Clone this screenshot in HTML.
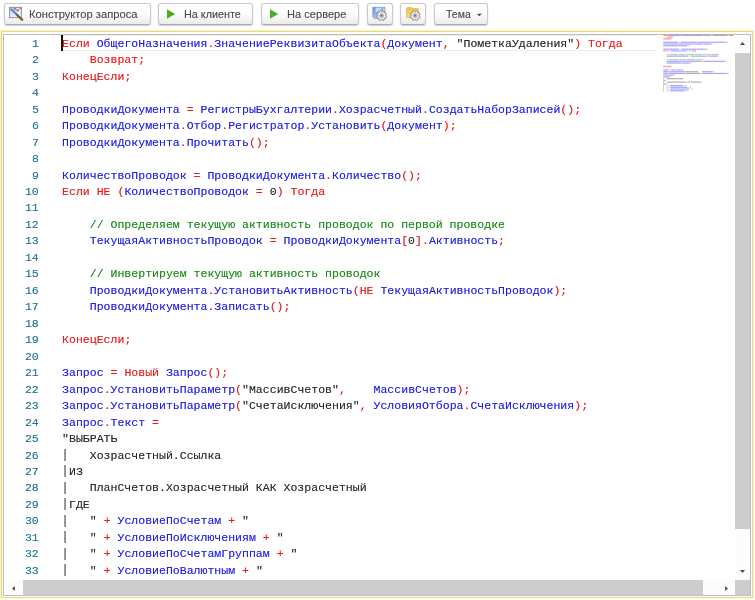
<!DOCTYPE html>
<html><head><meta charset="utf-8">
<style>
html,body{margin:0;padding:0;background:#fff;width:755px;height:600px;overflow:hidden;}
body{position:relative;font-family:"Liberation Sans",sans-serif;}
.btn{position:absolute;top:3px;height:20px;box-sizing:content-box;border:1px solid #c9c9c9;border-bottom-color:#a9a9a9;border-radius:3px;
 background:linear-gradient(#ffffff 0%,#fdfdfd 45%,#ececef 100%);box-shadow:0 1px 1.5px rgba(0,0,0,0.2);will-change:transform;}
.btn .t{position:absolute;transform-origin:0 0;top:3.4px;font-size:11.3px;line-height:14px;color:#4a4a4a;text-shadow:0 0 0.6px rgba(74,74,74,0.4);white-space:nowrap;}
.play{position:absolute;left:9px;top:6px;width:0;height:0;border-left:8px solid #3cb52e;border-top:4.5px solid transparent;border-bottom:4.5px solid transparent;}
.bx{position:absolute;}
.ln,.cl{position:absolute;font-family:"Liberation Mono",monospace;font-size:11.54px;line-height:16px;height:16px;white-space:pre;}
.ln{left:0;width:38.8px;text-align:right;color:#237893;text-shadow:0 0 0.6px rgba(35,120,147,0.45);}
.cl{left:62.1px;}
.k,.p{color:#ea1a1a;text-shadow:0 0 0.6px rgba(234,26,26,0.45)}.i{color:#2020e4;text-shadow:0 0 0.6px rgba(32,32,228,0.45)}.s,.n{color:#2a2a2a;text-shadow:0 0 0.6px rgba(42,42,42,0.45)}.c{color:#1a8c1a;text-shadow:0 0 0.6px rgba(26,140,26,0.45)}.b{display:inline-block;width:6.924px;height:12px;vertical-align:top;margin-top:1.3px;color:transparent;overflow:hidden;background:linear-gradient(90deg,rgba(150,150,150,0) 1.9px,rgba(150,150,150,0.55) 2.2px,#8e8e8e 2.6px,#8e8e8e 3.5px,rgba(150,150,150,0.55) 3.9px,rgba(150,150,150,0) 4.2px)}
</style></head><body>
<div class="btn" style="left:4px;width:145px"><span class="t" style="left:24.2px;transform:scaleX(0.990)">Конструктор запроса</span></div>
<div class="btn" style="left:158px;width:93px"><span class="t" style="left:24.6px;transform:scaleX(0.955)">На клиенте</span></div>
<div class="btn" style="left:261px;width:96px"><span class="t" style="left:24.8px;transform:scaleX(0.982)">На сервере</span></div>
<div class="btn" style="left:367px;width:24px"></div>
<div class="btn" style="left:400px;width:24px"></div>
<div class="btn" style="left:434px;width:52px"><span class="t" style="left:11.3px;transform:scaleX(0.930)">Тема</span></div>
<svg class="bx" style="left:0;top:0" width="500" height="28" viewBox="0 0 500 28">
<defs>
<linearGradient id="g1" x1="0" y1="0" x2="1" y2="1"><stop offset="0" stop-color="#bcdcf2"/><stop offset="1" stop-color="#ffffff"/></linearGradient>
<linearGradient id="g2" x1="0" y1="0" x2="0" y2="1"><stop offset="0" stop-color="#6b96d2"/><stop offset="1" stop-color="#a8c6ea"/></linearGradient>
<linearGradient id="g3" x1="0" y1="0" x2="0" y2="1"><stop offset="0" stop-color="#f3c049"/><stop offset="1" stop-color="#f1e27c"/></linearGradient>
</defs>
<!-- query builder icon -->
<rect x="9.6" y="7.4" width="11.8" height="10.2" fill="url(#g1)" stroke="#8d9096" stroke-width="1"/>
<circle cx="15" cy="8.7" r="1.2" fill="#dc6a50"/><circle cx="17.6" cy="10.2" r="1.3" fill="#dc6a50"/><circle cx="20.6" cy="8.3" r="1.1" fill="#d8705c"/>
<path d="M11.3 9.3 L16.6 14.4" stroke="#4c8fd2" stroke-width="2.2" stroke-linecap="round"/>
<path d="M16.4 14.2 L18.2 16" stroke="#4e8040" stroke-width="2.2"/>
<path d="M18 15.8 L22.2 19.8" stroke="#7a5a1e" stroke-width="2.2" stroke-linecap="round"/>
<!-- save settings icon -->
<path d="M372.8 7.3 H385 V18.2 H374 L372.8 17 Z" fill="url(#g2)" stroke="#5b83bd" stroke-width="0.6"/>
<rect x="375.6" y="7.6" width="9" height="4.4" fill="#c4d8f2"/>
<rect x="381.4" y="8" width="1.6" height="3" fill="#86a8da"/>
<path d="M386.56 16.79 L385.95 18.26 L384.80 18.00 L384.00 18.80 L384.26 19.95 L382.79 20.56 L382.16 19.56 L381.04 19.56 L380.41 20.56 L378.94 19.95 L379.20 18.80 L378.40 18.00 L377.25 18.26 L376.64 16.79 L377.64 16.16 L377.64 15.04 L376.64 14.41 L377.25 12.94 L378.40 13.20 L379.20 12.40 L378.94 11.25 L380.41 10.64 L381.04 11.64 L382.16 11.64 L382.79 10.64 L384.26 11.25 L384.00 12.40 L384.80 13.20 L385.95 12.94 L386.56 14.41 L385.56 15.04 L385.56 16.16 Z" fill="#f1f1f1" stroke="#868686" stroke-width="0.9" stroke-linejoin="round"/><circle cx="381.60" cy="15.60" r="1.9" fill="#cfcfcf" stroke="#8a8a8a" stroke-width="0.7"/><circle cx="381.60" cy="15.60" r="0.9" fill="#606060"/>
<!-- load settings icon -->
<path d="M406.5 9 Q406.5 7.4 408 7.4 H411 Q412 7.4 412.4 8.6 H417.6 Q418.6 8.6 418.6 9.6 V17.7 H406.5 Z" fill="url(#g3)" stroke="#e0a838" stroke-width="0.6"/>
<path d="M420.16 16.79 L419.55 18.26 L418.40 18.00 L417.60 18.80 L417.86 19.95 L416.39 20.56 L415.76 19.56 L414.64 19.56 L414.01 20.56 L412.54 19.95 L412.80 18.80 L412.00 18.00 L410.85 18.26 L410.24 16.79 L411.24 16.16 L411.24 15.04 L410.24 14.41 L410.85 12.94 L412.00 13.20 L412.80 12.40 L412.54 11.25 L414.01 10.64 L414.64 11.64 L415.76 11.64 L416.39 10.64 L417.86 11.25 L417.60 12.40 L418.40 13.20 L419.55 12.94 L420.16 14.41 L419.16 15.04 L419.16 16.16 Z" fill="#f1f1f1" stroke="#868686" stroke-width="0.9" stroke-linejoin="round"/><circle cx="415.20" cy="15.60" r="1.9" fill="#cfcfcf" stroke="#8a8a8a" stroke-width="0.7"/><circle cx="415.20" cy="15.60" r="0.9" fill="#606060"/>
<path d="M167 9.3 L175.2 14 L167 18.7 Z" fill="#49ad24"/>
<path d="M270 9.3 L278.2 14 L270 18.7 Z" fill="#49ad24"/>
<!-- dropdown caret -->
<path d="M476.8 13.7 H481.8 L479.3 16.3 Z" fill="#444"/>
</svg>
<!-- editor frame -->
<div class="bx" style="left:0;top:29px;width:754px;height:1px;background:#fffef0"></div>
<div class="bx" style="left:0;top:30px;width:754px;height:569px;background:#fdf6ac"></div>
<div class="bx" style="left:0;top:31px;width:1px;height:567px;background:#fffb9a"></div>
<div class="bx" style="left:1px;top:31px;width:752px;height:567px;background:#e2d794"></div>
<div class="bx" style="left:752px;top:31px;width:1px;height:567px;background:#f0d98e"></div><div class="bx" style="left:753px;top:31px;width:1px;height:567px;background:#fbeeb0"></div>
<div class="bx" style="left:0;top:598px;width:754px;height:1px;background:#fffbdf"></div>
<div class="bx" style="left:2px;top:32px;width:750px;height:565px;background:#fffef4"></div>
<div class="bx" style="left:3px;top:34px;width:748px;height:562px;background:#bebec6"></div>
<div class="bx" id="edw" style="left:4px;top:35px;width:746px;height:560px;background:#fff"></div>
<!-- current line + cursor -->
<div class="bx" style="left:62px;top:35px;width:594px;height:16px;box-sizing:border-box;border-top:1px solid #ececec;border-bottom:1.7px solid #ececec"></div>
<div class="bx" style="left:61px;top:35px;width:1.7px;height:16px;background:#111"></div>
<svg class="bx" style="left:0;top:0" width="755" height="100" viewBox="0 0 755 100" shape-rendering="auto"><rect x="663.20" y="34.75" width="3.46" height="1.25" fill="#ff0000" opacity="0.40"/><rect x="667.53" y="34.75" width="13.84" height="1.25" fill="#0000ff" opacity="0.34"/><rect x="681.37" y="34.75" width="0.86" height="1.25" fill="#ff0000" opacity="0.26"/><rect x="682.23" y="34.75" width="20.76" height="1.25" fill="#0000ff" opacity="0.34"/><rect x="702.99" y="34.75" width="0.86" height="1.25" fill="#ff0000" opacity="0.26"/><rect x="703.86" y="34.75" width="6.92" height="1.25" fill="#0000ff" opacity="0.34"/><rect x="710.78" y="34.75" width="0.86" height="1.25" fill="#ff0000" opacity="0.26"/><rect x="712.50" y="34.75" width="14.71" height="1.25" fill="#000000" opacity="0.30"/><rect x="727.21" y="34.75" width="0.86" height="1.25" fill="#ff0000" opacity="0.26"/><rect x="728.94" y="34.75" width="4.33" height="1.25" fill="#ff0000" opacity="0.40"/><rect x="666.66" y="36.48" width="6.05" height="1.25" fill="#ff0000" opacity="0.40"/><rect x="672.72" y="36.48" width="0.86" height="1.25" fill="#ff0000" opacity="0.26"/><rect x="663.20" y="38.21" width="7.79" height="1.25" fill="#ff0000" opacity="0.40"/><rect x="670.99" y="38.21" width="0.86" height="1.25" fill="#ff0000" opacity="0.26"/><rect x="663.20" y="41.67" width="14.71" height="1.25" fill="#0000ff" opacity="0.34"/><rect x="678.77" y="41.67" width="0.86" height="1.25" fill="#ff0000" opacity="0.26"/><rect x="680.50" y="41.67" width="16.43" height="1.25" fill="#0000ff" opacity="0.34"/><rect x="696.94" y="41.67" width="0.86" height="1.25" fill="#ff0000" opacity="0.26"/><rect x="697.80" y="41.67" width="10.38" height="1.25" fill="#0000ff" opacity="0.34"/><rect x="708.18" y="41.67" width="0.86" height="1.25" fill="#ff0000" opacity="0.26"/><rect x="709.05" y="41.67" width="16.43" height="1.25" fill="#0000ff" opacity="0.34"/><rect x="725.48" y="41.67" width="2.59" height="1.25" fill="#ff0000" opacity="0.26"/><rect x="663.20" y="43.41" width="14.71" height="1.25" fill="#0000ff" opacity="0.34"/><rect x="677.91" y="43.41" width="0.86" height="1.25" fill="#ff0000" opacity="0.26"/><rect x="678.77" y="43.41" width="4.33" height="1.25" fill="#0000ff" opacity="0.34"/><rect x="683.10" y="43.41" width="0.86" height="1.25" fill="#ff0000" opacity="0.26"/><rect x="683.96" y="43.41" width="9.52" height="1.25" fill="#0000ff" opacity="0.34"/><rect x="693.48" y="43.41" width="0.86" height="1.25" fill="#ff0000" opacity="0.26"/><rect x="694.34" y="43.41" width="8.65" height="1.25" fill="#0000ff" opacity="0.34"/><rect x="702.99" y="43.41" width="0.86" height="1.25" fill="#ff0000" opacity="0.26"/><rect x="703.86" y="43.41" width="6.92" height="1.25" fill="#0000ff" opacity="0.34"/><rect x="710.78" y="43.41" width="1.73" height="1.25" fill="#ff0000" opacity="0.26"/><rect x="663.20" y="45.14" width="14.71" height="1.25" fill="#0000ff" opacity="0.34"/><rect x="677.91" y="45.14" width="0.86" height="1.25" fill="#ff0000" opacity="0.26"/><rect x="678.77" y="45.14" width="7.79" height="1.25" fill="#0000ff" opacity="0.34"/><rect x="686.56" y="45.14" width="2.59" height="1.25" fill="#ff0000" opacity="0.26"/><rect x="663.20" y="48.60" width="15.57" height="1.25" fill="#0000ff" opacity="0.34"/><rect x="679.63" y="48.60" width="0.86" height="1.25" fill="#ff0000" opacity="0.26"/><rect x="681.37" y="48.60" width="14.71" height="1.25" fill="#0000ff" opacity="0.34"/><rect x="696.07" y="48.60" width="0.86" height="1.25" fill="#ff0000" opacity="0.26"/><rect x="696.94" y="48.60" width="8.65" height="1.25" fill="#0000ff" opacity="0.34"/><rect x="705.59" y="48.60" width="2.59" height="1.25" fill="#ff0000" opacity="0.26"/><rect x="663.20" y="50.33" width="3.46" height="1.25" fill="#ff0000" opacity="0.40"/><rect x="667.53" y="50.33" width="1.73" height="1.25" fill="#ff0000" opacity="0.40"/><rect x="670.12" y="50.33" width="0.86" height="1.25" fill="#ff0000" opacity="0.26"/><rect x="670.99" y="50.33" width="15.57" height="1.25" fill="#0000ff" opacity="0.34"/><rect x="687.42" y="50.33" width="0.86" height="1.25" fill="#ff0000" opacity="0.26"/><rect x="689.15" y="50.33" width="0.86" height="1.25" fill="#000000" opacity="0.30"/><rect x="690.02" y="50.33" width="0.86" height="1.25" fill="#ff0000" opacity="0.26"/><rect x="691.75" y="50.33" width="4.33" height="1.25" fill="#ff0000" opacity="0.40"/><rect x="666.66" y="53.79" width="1.73" height="1.25" fill="#008000" opacity="0.30"/><rect x="669.25" y="53.79" width="8.65" height="1.25" fill="#008000" opacity="0.30"/><rect x="678.77" y="53.79" width="6.05" height="1.25" fill="#008000" opacity="0.30"/><rect x="685.69" y="53.79" width="8.65" height="1.25" fill="#008000" opacity="0.30"/><rect x="695.21" y="53.79" width="6.92" height="1.25" fill="#008000" opacity="0.30"/><rect x="702.99" y="53.79" width="1.73" height="1.25" fill="#008000" opacity="0.30"/><rect x="705.59" y="53.79" width="5.19" height="1.25" fill="#008000" opacity="0.30"/><rect x="711.64" y="53.79" width="6.92" height="1.25" fill="#008000" opacity="0.30"/><rect x="666.66" y="55.52" width="21.62" height="1.25" fill="#0000ff" opacity="0.34"/><rect x="689.15" y="55.52" width="0.86" height="1.25" fill="#ff0000" opacity="0.26"/><rect x="690.88" y="55.52" width="14.71" height="1.25" fill="#0000ff" opacity="0.34"/><rect x="705.59" y="55.52" width="0.86" height="1.25" fill="#ff0000" opacity="0.26"/><rect x="706.45" y="55.52" width="0.86" height="1.25" fill="#000000" opacity="0.30"/><rect x="707.32" y="55.52" width="1.73" height="1.25" fill="#ff0000" opacity="0.26"/><rect x="709.05" y="55.52" width="8.65" height="1.25" fill="#0000ff" opacity="0.34"/><rect x="717.70" y="55.52" width="0.86" height="1.25" fill="#ff0000" opacity="0.26"/><rect x="666.66" y="58.98" width="1.73" height="1.25" fill="#008000" opacity="0.30"/><rect x="669.25" y="58.98" width="9.52" height="1.25" fill="#008000" opacity="0.30"/><rect x="679.63" y="58.98" width="6.05" height="1.25" fill="#008000" opacity="0.30"/><rect x="686.56" y="58.98" width="8.65" height="1.25" fill="#008000" opacity="0.30"/><rect x="696.07" y="58.98" width="6.92" height="1.25" fill="#008000" opacity="0.30"/><rect x="666.66" y="60.72" width="14.71" height="1.25" fill="#0000ff" opacity="0.34"/><rect x="681.37" y="60.72" width="0.86" height="1.25" fill="#ff0000" opacity="0.26"/><rect x="682.23" y="60.72" width="17.30" height="1.25" fill="#0000ff" opacity="0.34"/><rect x="699.53" y="60.72" width="0.86" height="1.25" fill="#ff0000" opacity="0.26"/><rect x="700.40" y="60.72" width="1.73" height="1.25" fill="#ff0000" opacity="0.40"/><rect x="702.99" y="60.72" width="21.62" height="1.25" fill="#0000ff" opacity="0.34"/><rect x="724.62" y="60.72" width="1.73" height="1.25" fill="#ff0000" opacity="0.26"/><rect x="666.66" y="62.45" width="14.71" height="1.25" fill="#0000ff" opacity="0.34"/><rect x="681.37" y="62.45" width="0.86" height="1.25" fill="#ff0000" opacity="0.26"/><rect x="682.23" y="62.45" width="6.92" height="1.25" fill="#0000ff" opacity="0.34"/><rect x="689.15" y="62.45" width="2.59" height="1.25" fill="#ff0000" opacity="0.26"/><rect x="663.20" y="65.91" width="7.79" height="1.25" fill="#ff0000" opacity="0.40"/><rect x="670.99" y="65.91" width="0.86" height="1.25" fill="#ff0000" opacity="0.26"/><rect x="663.20" y="69.37" width="5.19" height="1.25" fill="#0000ff" opacity="0.34"/><rect x="669.25" y="69.37" width="0.86" height="1.25" fill="#ff0000" opacity="0.26"/><rect x="670.99" y="69.37" width="4.33" height="1.25" fill="#ff0000" opacity="0.40"/><rect x="676.18" y="69.37" width="5.19" height="1.25" fill="#0000ff" opacity="0.34"/><rect x="681.37" y="69.37" width="2.59" height="1.25" fill="#ff0000" opacity="0.26"/><rect x="663.20" y="71.10" width="5.19" height="1.25" fill="#0000ff" opacity="0.34"/><rect x="668.39" y="71.10" width="0.86" height="1.25" fill="#ff0000" opacity="0.26"/><rect x="669.25" y="71.10" width="15.57" height="1.25" fill="#0000ff" opacity="0.34"/><rect x="684.83" y="71.10" width="0.86" height="1.25" fill="#ff0000" opacity="0.26"/><rect x="685.69" y="71.10" width="12.11" height="1.25" fill="#000000" opacity="0.30"/><rect x="697.80" y="71.10" width="0.86" height="1.25" fill="#ff0000" opacity="0.26"/><rect x="702.12" y="71.10" width="10.38" height="1.25" fill="#0000ff" opacity="0.34"/><rect x="712.50" y="71.10" width="1.73" height="1.25" fill="#ff0000" opacity="0.26"/><rect x="663.20" y="72.83" width="5.19" height="1.25" fill="#0000ff" opacity="0.34"/><rect x="668.39" y="72.83" width="0.86" height="1.25" fill="#ff0000" opacity="0.26"/><rect x="669.25" y="72.83" width="15.57" height="1.25" fill="#0000ff" opacity="0.34"/><rect x="684.83" y="72.83" width="0.86" height="1.25" fill="#ff0000" opacity="0.26"/><rect x="685.69" y="72.83" width="14.71" height="1.25" fill="#000000" opacity="0.30"/><rect x="700.40" y="72.83" width="0.86" height="1.25" fill="#ff0000" opacity="0.26"/><rect x="702.12" y="72.83" width="11.24" height="1.25" fill="#0000ff" opacity="0.34"/><rect x="713.37" y="72.83" width="0.86" height="1.25" fill="#ff0000" opacity="0.26"/><rect x="714.24" y="72.83" width="12.97" height="1.25" fill="#0000ff" opacity="0.34"/><rect x="727.21" y="72.83" width="1.73" height="1.25" fill="#ff0000" opacity="0.26"/><rect x="663.20" y="74.56" width="5.19" height="1.25" fill="#0000ff" opacity="0.34"/><rect x="668.39" y="74.56" width="0.86" height="1.25" fill="#ff0000" opacity="0.26"/><rect x="669.25" y="74.56" width="4.33" height="1.25" fill="#0000ff" opacity="0.34"/><rect x="674.45" y="74.56" width="0.86" height="1.25" fill="#ff0000" opacity="0.26"/><rect x="663.20" y="76.29" width="6.92" height="1.25" fill="#000000" opacity="0.30"/><rect x="663.20" y="78.03" width="0.86" height="1.25" fill="#000000" opacity="0.30"/><rect x="666.66" y="78.03" width="16.43" height="1.25" fill="#000000" opacity="0.30"/><rect x="663.20" y="79.76" width="0.86" height="1.25" fill="#000000" opacity="0.30"/><rect x="664.07" y="79.76" width="1.73" height="1.25" fill="#000000" opacity="0.30"/><rect x="663.20" y="81.49" width="0.86" height="1.25" fill="#000000" opacity="0.30"/><rect x="666.66" y="81.49" width="19.89" height="1.25" fill="#000000" opacity="0.30"/><rect x="687.42" y="81.49" width="2.59" height="1.25" fill="#000000" opacity="0.30"/><rect x="690.88" y="81.49" width="10.38" height="1.25" fill="#000000" opacity="0.30"/><rect x="663.20" y="83.22" width="0.86" height="1.25" fill="#000000" opacity="0.30"/><rect x="664.07" y="83.22" width="2.59" height="1.25" fill="#000000" opacity="0.30"/><rect x="663.20" y="84.95" width="0.86" height="1.25" fill="#000000" opacity="0.30"/><rect x="666.66" y="84.95" width="0.86" height="1.25" fill="#000000" opacity="0.30"/><rect x="668.39" y="84.95" width="0.86" height="1.25" fill="#ff0000" opacity="0.26"/><rect x="670.12" y="84.95" width="12.97" height="1.25" fill="#0000ff" opacity="0.34"/><rect x="683.96" y="84.95" width="0.86" height="1.25" fill="#ff0000" opacity="0.26"/><rect x="685.69" y="84.95" width="0.86" height="1.25" fill="#000000" opacity="0.30"/><rect x="663.20" y="86.68" width="0.86" height="1.25" fill="#000000" opacity="0.30"/><rect x="666.66" y="86.68" width="0.86" height="1.25" fill="#000000" opacity="0.30"/><rect x="668.39" y="86.68" width="0.86" height="1.25" fill="#ff0000" opacity="0.26"/><rect x="670.12" y="86.68" width="17.30" height="1.25" fill="#0000ff" opacity="0.34"/><rect x="688.29" y="86.68" width="0.86" height="1.25" fill="#ff0000" opacity="0.26"/><rect x="690.02" y="86.68" width="0.86" height="1.25" fill="#000000" opacity="0.30"/><rect x="663.20" y="88.41" width="0.86" height="1.25" fill="#000000" opacity="0.30"/><rect x="666.66" y="88.41" width="0.86" height="1.25" fill="#000000" opacity="0.30"/><rect x="668.39" y="88.41" width="0.86" height="1.25" fill="#ff0000" opacity="0.26"/><rect x="670.12" y="88.41" width="19.03" height="1.25" fill="#0000ff" opacity="0.34"/><rect x="690.02" y="88.41" width="0.86" height="1.25" fill="#ff0000" opacity="0.26"/><rect x="691.75" y="88.41" width="0.86" height="1.25" fill="#000000" opacity="0.30"/><rect x="663.20" y="90.14" width="0.86" height="1.25" fill="#000000" opacity="0.30"/><rect x="666.66" y="90.14" width="0.86" height="1.25" fill="#000000" opacity="0.30"/><rect x="668.39" y="90.14" width="0.86" height="1.25" fill="#ff0000" opacity="0.26"/><rect x="670.12" y="90.14" width="14.71" height="1.25" fill="#0000ff" opacity="0.34"/><rect x="685.69" y="90.14" width="0.86" height="1.25" fill="#ff0000" opacity="0.26"/><rect x="687.42" y="90.14" width="0.86" height="1.25" fill="#000000" opacity="0.30"/></svg>
<div class="bx" style="left:750px;top:34px;width:1px;height:562px;background:#b9b9b9"></div>
<!-- scrollbars -->
<div class="bx" style="left:735px;top:35px;width:15px;height:545px;background:#fcfcfc"></div>
<div class="bx" style="left:735px;top:53px;width:15px;height:476px;background:#cdcdcd"></div>
<div class="bx" style="left:4px;top:580px;width:731px;height:15px;background:#fcfcfc"></div>
<div class="bx" style="left:23px;top:580px;width:680px;height:15px;background:#cdcdcd"></div>
<div class="bx" style="left:735px;top:580px;width:15px;height:15px;background:#cdcdcd"></div>
<svg class="bx" style="left:739px;top:41px" width="7" height="5"><path d="M1 3.9 L3.5 1.1 L6 3.9 Z" fill="#4a4a4a"/></svg>
<svg class="bx" style="left:739px;top:569px" width="7" height="5"><path d="M1 1.1 L6 1.1 L3.5 3.9 Z" fill="#4a4a4a"/></svg>
<svg class="bx" style="left:11px;top:585px" width="5" height="7"><path d="M3.9 1 L3.9 6 L1.1 3.5 Z" fill="#4a4a4a"/></svg>
<svg class="bx" style="left:724px;top:585px" width="5" height="7"><path d="M1.1 1 L1.1 6 L3.9 3.5 Z" fill="#4a4a4a"/></svg>
<div id="code" style="position:absolute;left:0;top:0;width:755px;height:600px;will-change:transform">
<div class="ln" style="top:35.75px">1</div><div class="cl" style="top:35.75px"><span class="k">Если </span><span class="i">ОбщегоНазначения</span><span class="p">.</span><span class="i">ЗначениеРеквизитаОбъекта</span><span class="p">(</span><span class="i">Документ</span><span class="p">,</span><span class="s"> "ПометкаУдаления"</span><span class="p">) </span><span class="k">Тогда</span></div>
<div class="ln" style="top:52.22px">2</div><div class="cl" style="top:52.22px"><span class="k">    Возврат</span><span class="p">;</span></div>
<div class="ln" style="top:68.69px">3</div><div class="cl" style="top:68.69px"><span class="k">КонецЕсли</span><span class="p">;</span></div>
<div class="ln" style="top:85.16px">4</div><div class="cl" style="top:85.16px"></div>
<div class="ln" style="top:101.63px">5</div><div class="cl" style="top:101.63px"><span class="i">ПроводкиДокумента </span><span class="p">= </span><span class="i">РегистрыБухгалтерии</span><span class="p">.</span><span class="i">Хозрасчетный</span><span class="p">.</span><span class="i">СоздатьНаборЗаписей</span><span class="p">();</span></div>
<div class="ln" style="top:118.10px">6</div><div class="cl" style="top:118.10px"><span class="i">ПроводкиДокумента</span><span class="p">.</span><span class="i">Отбор</span><span class="p">.</span><span class="i">Регистратор</span><span class="p">.</span><span class="i">Установить</span><span class="p">(</span><span class="i">Документ</span><span class="p">);</span></div>
<div class="ln" style="top:134.57px">7</div><div class="cl" style="top:134.57px"><span class="i">ПроводкиДокумента</span><span class="p">.</span><span class="i">Прочитать</span><span class="p">();</span></div>
<div class="ln" style="top:151.04px">8</div><div class="cl" style="top:151.04px"></div>
<div class="ln" style="top:167.51px">9</div><div class="cl" style="top:167.51px"><span class="i">КоличествоПроводок </span><span class="p">= </span><span class="i">ПроводкиДокумента</span><span class="p">.</span><span class="i">Количество</span><span class="p">();</span></div>
<div class="ln" style="top:183.98px">10</div><div class="cl" style="top:183.98px"><span class="k">Если НЕ </span><span class="p">(</span><span class="i">КоличествоПроводок </span><span class="p">= </span><span class="n">0</span><span class="p">) </span><span class="k">Тогда</span></div>
<div class="ln" style="top:200.45px">11</div><div class="cl" style="top:200.45px"></div>
<div class="ln" style="top:216.92px">12</div><div class="cl" style="top:216.92px"><span class="c">    // Определяем текущую активность проводок по первой проводке</span></div>
<div class="ln" style="top:233.39px">13</div><div class="cl" style="top:233.39px"><span class="i">    ТекущаяАктивностьПроводок </span><span class="p">= </span><span class="i">ПроводкиДокумента</span><span class="p">[</span><span class="n">0</span><span class="p">].</span><span class="i">Активность</span><span class="p">;</span></div>
<div class="ln" style="top:249.86px">14</div><div class="cl" style="top:249.86px"></div>
<div class="ln" style="top:266.33px">15</div><div class="cl" style="top:266.33px"><span class="c">    // Инвертируем текущую активность проводок</span></div>
<div class="ln" style="top:282.80px">16</div><div class="cl" style="top:282.80px"><span class="i">    ПроводкиДокумента</span><span class="p">.</span><span class="i">УстановитьАктивность</span><span class="p">(</span><span class="k">НЕ </span><span class="i">ТекущаяАктивностьПроводок</span><span class="p">);</span></div>
<div class="ln" style="top:299.27px">17</div><div class="cl" style="top:299.27px"><span class="i">    ПроводкиДокумента</span><span class="p">.</span><span class="i">Записать</span><span class="p">();</span></div>
<div class="ln" style="top:315.74px">18</div><div class="cl" style="top:315.74px"></div>
<div class="ln" style="top:332.21px">19</div><div class="cl" style="top:332.21px"><span class="k">КонецЕсли</span><span class="p">;</span></div>
<div class="ln" style="top:348.68px">20</div><div class="cl" style="top:348.68px"></div>
<div class="ln" style="top:365.15px">21</div><div class="cl" style="top:365.15px"><span class="i">Запрос </span><span class="p">= </span><span class="k">Новый </span><span class="i">Запрос</span><span class="p">();</span></div>
<div class="ln" style="top:381.62px">22</div><div class="cl" style="top:381.62px"><span class="i">Запрос</span><span class="p">.</span><span class="i">УстановитьПараметр</span><span class="p">(</span><span class="s">"МассивСчетов"</span><span class="p">,    </span><span class="i">МассивСчетов</span><span class="p">);</span></div>
<div class="ln" style="top:398.09px">23</div><div class="cl" style="top:398.09px"><span class="i">Запрос</span><span class="p">.</span><span class="i">УстановитьПараметр</span><span class="p">(</span><span class="s">"СчетаИсключения"</span><span class="p">, </span><span class="i">УсловияОтбора</span><span class="p">.</span><span class="i">СчетаИсключения</span><span class="p">);</span></div>
<div class="ln" style="top:414.56px">24</div><div class="cl" style="top:414.56px"><span class="i">Запрос</span><span class="p">.</span><span class="i">Текст </span><span class="p">=</span></div>
<div class="ln" style="top:431.03px">25</div><div class="cl" style="top:431.03px"><span class="s">"ВЫБРАТЬ</span></div>
<div class="ln" style="top:447.50px">26</div><div class="cl" style="top:447.50px"><span class="b">|</span><span class="s">   Хозрасчетный.Ссылка</span></div>
<div class="ln" style="top:463.97px">27</div><div class="cl" style="top:463.97px"><span class="b">|</span><span class="s">ИЗ</span></div>
<div class="ln" style="top:480.44px">28</div><div class="cl" style="top:480.44px"><span class="b">|</span><span class="s">   ПланСчетов.Хозрасчетный КАК Хозрасчетный</span></div>
<div class="ln" style="top:496.91px">29</div><div class="cl" style="top:496.91px"><span class="b">|</span><span class="s">ГДЕ</span></div>
<div class="ln" style="top:513.38px">30</div><div class="cl" style="top:513.38px"><span class="b">|</span><span class="s">   " </span><span class="p">+ </span><span class="i">УсловиеПоСчетам </span><span class="p">+ </span><span class="s">"</span></div>
<div class="ln" style="top:529.85px">31</div><div class="cl" style="top:529.85px"><span class="b">|</span><span class="s">   " </span><span class="p">+ </span><span class="i">УсловиеПоИсключениям </span><span class="p">+ </span><span class="s">"</span></div>
<div class="ln" style="top:546.32px">32</div><div class="cl" style="top:546.32px"><span class="b">|</span><span class="s">   " </span><span class="p">+ </span><span class="i">УсловиеПоСчетамГруппам </span><span class="p">+ </span><span class="s">"</span></div>
<div class="ln" style="top:562.79px">33</div><div class="cl" style="top:562.79px"><span class="b">|</span><span class="s">   " </span><span class="p">+ </span><span class="i">УсловиеПоВалютным </span><span class="p">+ </span><span class="s">"</span></div>
</div>
</body></html>
